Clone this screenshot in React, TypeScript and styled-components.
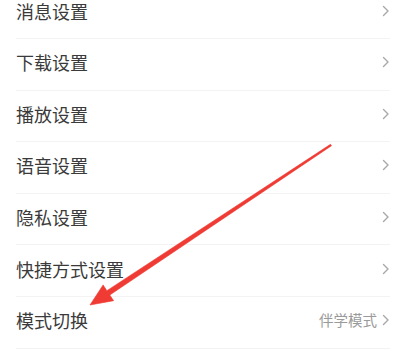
import React from "react";
import styled, { createGlobalStyle } from "styled-components";

const Global = createGlobalStyle`
  html, body { margin: 0; padding: 0; background: #ffffff; }
  body { font-family: "Noto Sans CJK SC", "Noto Sans", sans-serif; overflow: hidden; }
`;

const Page = styled.div`
  position: relative;
  width: 402px;
  height: 354px;
  overflow: hidden;
  background: #ffffff;
`;

const List = styled.ul`
  list-style: none;
  margin: -12.6px 0 0 0;
  padding: 0;
`;

const Row = styled.li`
  box-sizing: border-box;
  height: 51.6px;
  margin: 0 12px 0 16px;
  padding-bottom: 4px;
  display: flex;
  align-items: center;
  justify-content: space-between;
  border-bottom: 1px solid #f3f3f3;
`;

const Label = styled.span`
  font-size: 18px;
  color: #3a3a3a;
  line-height: 1;
`;

const Right = styled.span`
  display: flex;
  align-items: center;
  gap: 5px;
`;

const Value = styled.span`
  font-size: 14.5px;
  color: #9a9a9a;
  line-height: 1;
`;

const Chevron = () => (
  <svg width="8" height="12" viewBox="0 0 8 12" style={{ display: "block" }}>
    <path d="M1.5 1.5 L6 6 L1.5 10.5" fill="none" stroke="#a8a8a8" strokeWidth="1.4" strokeLinecap="round" strokeLinejoin="round" />
  </svg>
);

const Overlay = styled.svg`
  position: absolute;
  left: 0;
  top: 0;
  pointer-events: none;
`;

const items: { label: string; value?: string }[] = [
  { label: "消息设置" },
  { label: "下载设置" },
  { label: "播放设置" },
  { label: "语音设置" },
  { label: "隐私设置" },
  { label: "快捷方式设置" },
  { label: "模式切换", value: "伴学模式" },
  { label: "" },
];

function Arrow() {
  const tail = { x: 331, y: 145 };
  const tip = { x: 90, y: 305 };
  const dx = tip.x - tail.x;
  const dy = tip.y - tail.y;
  const len = Math.hypot(dx, dy);
  const ux = dx / len;
  const uy = dy / len;
  const px = -uy;
  const py = ux;
  const headLen = 22;
  const headHalf = 9.5;
  const shaftTail = 0.9;
  const shaftHead = 2.6;
  const bx = tip.x - ux * headLen;
  const by = tip.y - uy * headLen;
  const pts = [
    [tail.x + px * shaftTail, tail.y + py * shaftTail],
    [bx + px * shaftHead, by + py * shaftHead],
    [bx + px * headHalf, by + py * headHalf],
    [tip.x, tip.y],
    [bx - px * headHalf, by - py * headHalf],
    [bx - px * shaftHead, by - py * shaftHead],
    [tail.x - px * shaftTail, tail.y - py * shaftTail],
  ]
    .map((p) => `${p[0].toFixed(1)},${p[1].toFixed(1)}`)
    .join(" ");
  return (
    <Overlay width="402" height="354" viewBox="0 0 402 354">
      <polygon points={pts} fill="#ef3b33" stroke="#ef3b33" strokeWidth="0.6" strokeLinejoin="round" />
    </Overlay>
  );
}

export default function App() {
  return (
    <Page>
      <Global />
      <List>
        {items.map((it, i) => (
          <Row key={i}>
            <Label>{it.label}</Label>
            {it.label && (
              <Right>
                {it.value && <Value>{it.value}</Value>}
                <Chevron />
              </Right>
            )}
          </Row>
        ))}
      </List>
      <Arrow />
    </Page>
  );
}
